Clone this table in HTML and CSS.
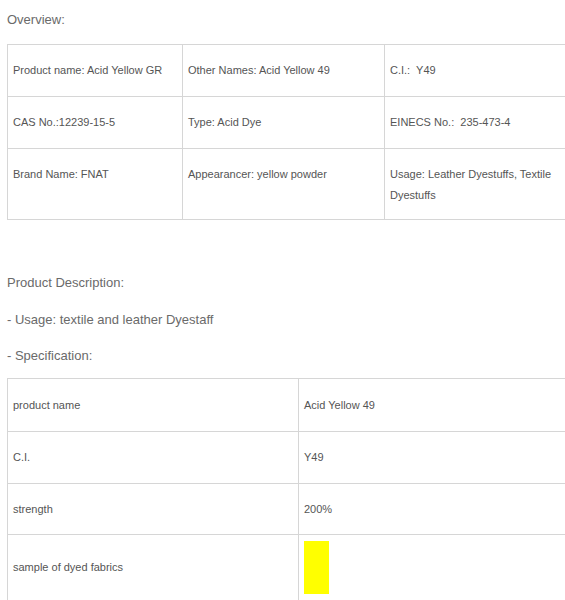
FILE: index.html
```html
<!DOCTYPE html>
<html>
<head>
<meta charset="utf-8">
<link rel="stylesheet" href="styles.css">
</head>
<body>
<div class="page">
  <p class="heading first">Overview:</p>
  <table class="overview">
    <colgroup><col class="c1"><col class="c2"><col class="c3"></colgroup>
    <tr>
      <td>Product name: Acid Yellow GR</td>
      <td>Other Names: Acid Yellow 49</td>
      <td>C.I.:&nbsp; Y49</td>
    </tr>
    <tr>
      <td>CAS No.:12239-15-5</td>
      <td>Type: Acid Dye</td>
      <td>EINECS No.:&nbsp; 235-473-4</td>
    </tr>
    <tr class="last">
      <td>Brand Name: FNAT</td>
      <td>Appearancer: yellow powder</td>
      <td>Usage: Leather Dyestuffs, Textile Dyestuffs</td>
    </tr>
  </table>
  <p class="heading desc">Product Description:</p>
  <p class="heading">- Usage: textile and leather Dyestaff</p>
  <p class="heading spec">- Specification:</p>
  <table class="spec-table">
    <colgroup><col class="s1"><col class="s2"></colgroup>
    <tr class="top"><td>product name</td><td>Acid Yellow 49</td></tr>
    <tr><td>C.I.</td><td>Y49</td></tr>
    <tr class="third"><td>strength</td><td>200%</td></tr>
    <tr class="sample"><td>sample of dyed fabrics</td><td><div class="swatch"></div></td></tr>
  </table>
</div>
</body>
</html>
```

FILE: styles.css
```css
html, body {
  margin: 0;
  padding: 0;
  background: #fff;
  overflow: hidden;
}
.page {
  padding-left: 7px;
  width: 600px;
  font-family: "Liberation Sans", Arial, sans-serif;
  color: #666;
}
.heading {
  font-size: 13px;
  line-height: 21px;
  margin: 0;
  color: #6a6a6a;
}
.heading.first {
  margin-top: 9px;
  margin-bottom: 14px;
}
.heading.desc {
  margin-top: 52px;
  margin-bottom: 16px;
}
.heading.spec {
  margin-top: 15px;
  margin-bottom: 12px;
}
table {
  border-collapse: collapse;
  table-layout: fixed;
  width: 582px;
  font-size: 11px;
  color: #555;
  border: 1px solid #dcdcdc;
}
td {
  border: 1px solid #d6d6d6;
  padding: 15px 5px;
  line-height: 21px;
  vertical-align: top;
}
.overview tr.last td {
  padding-bottom: 13px;
}
.overview .c1 { width: 175px; }
.overview .c2 { width: 202px; }
.overview .c3 { width: 205px; }
.spec-table .s1 { width: 291px; }
.spec-table .s2 { width: 291px; }
.spec-table td {
  vertical-align: middle;
  height: 21px;
}
.spec-table tr.top td {
  padding-top: 16px;
}
.spec-table tr.third td {
  padding-bottom: 14px;
}
.spec-table .sample td {
  padding-top: 6px;
  padding-bottom: 6px;
}
.swatch {
  width: 25px;
  height: 53px;
  background: #ffff00;
}
```
